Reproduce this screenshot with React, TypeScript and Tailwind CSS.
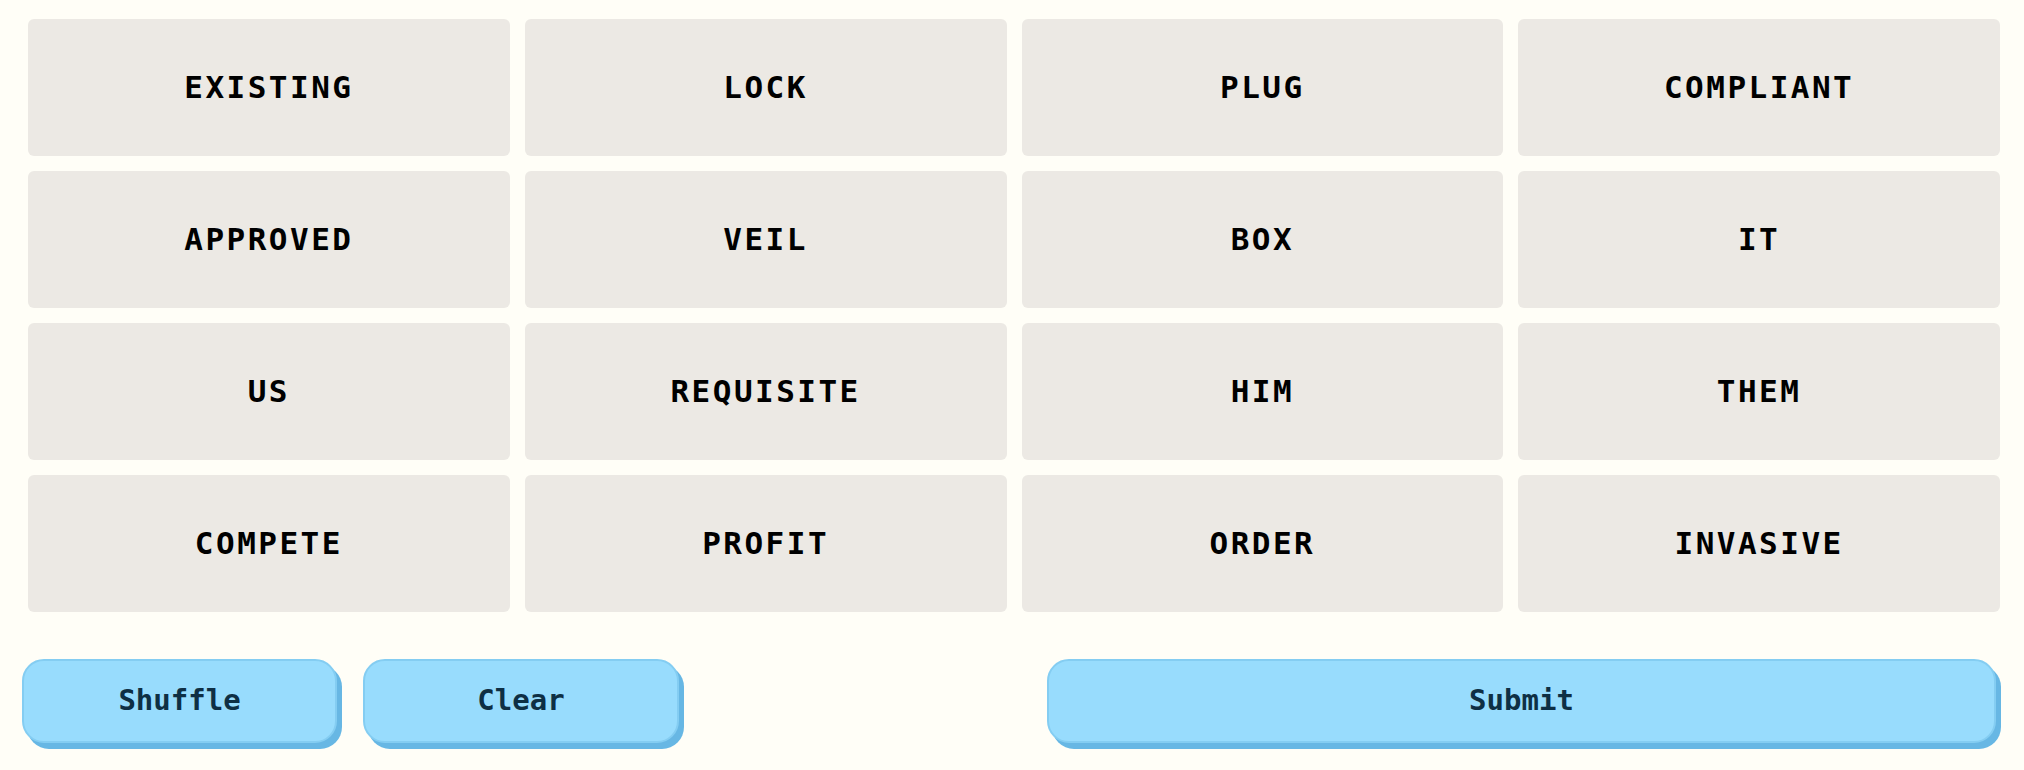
const words = [
  "EXISTING",
  "LOCK",
  "PLUG",
  "COMPLIANT",
  "APPROVED",
  "VEIL",
  "BOX",
  "IT",
  "US",
  "REQUISITE",
  "HIM",
  "THEM",
  "COMPETE",
  "PROFIT",
  "ORDER",
  "INVASIVE",
];

const buttonClass =
  "flex h-[84px] items-center justify-center rounded-[22px] border-2 border-[#84cdf2] bg-[#98dcfd] text-[29px] font-bold text-[#0e2f44] shadow-[5px_6px_0_#67b7e4]";

export default function App() {
  return (
    <main className="min-h-screen w-[2024px] bg-[#fffef7] font-['DejaVu_Sans_Mono',monospace]">
      <section className="grid grid-cols-4 gap-x-[15px] gap-y-[15px] px-[28px] pt-[19px] pr-[24px]">
        {words.map((word) => (
          <button
            key={word}
            className="flex h-[137px] items-center justify-center rounded-md bg-[#ece9e4] text-[31px] font-bold tracking-[0.08em] text-black"
          >
            {word}
          </button>
        ))}
      </section>

      <section className="mt-[47px] flex items-start pl-[22px] pr-[28px]">
        <button className={`${buttonClass} w-[315px]`}>Shuffle</button>
        <button className={`${buttonClass} ml-[26px] w-[316px]`}>Clear</button>
        <button className={`${buttonClass} ml-auto w-[949px]`}>Submit</button>
      </section>
    </main>
  );
}
